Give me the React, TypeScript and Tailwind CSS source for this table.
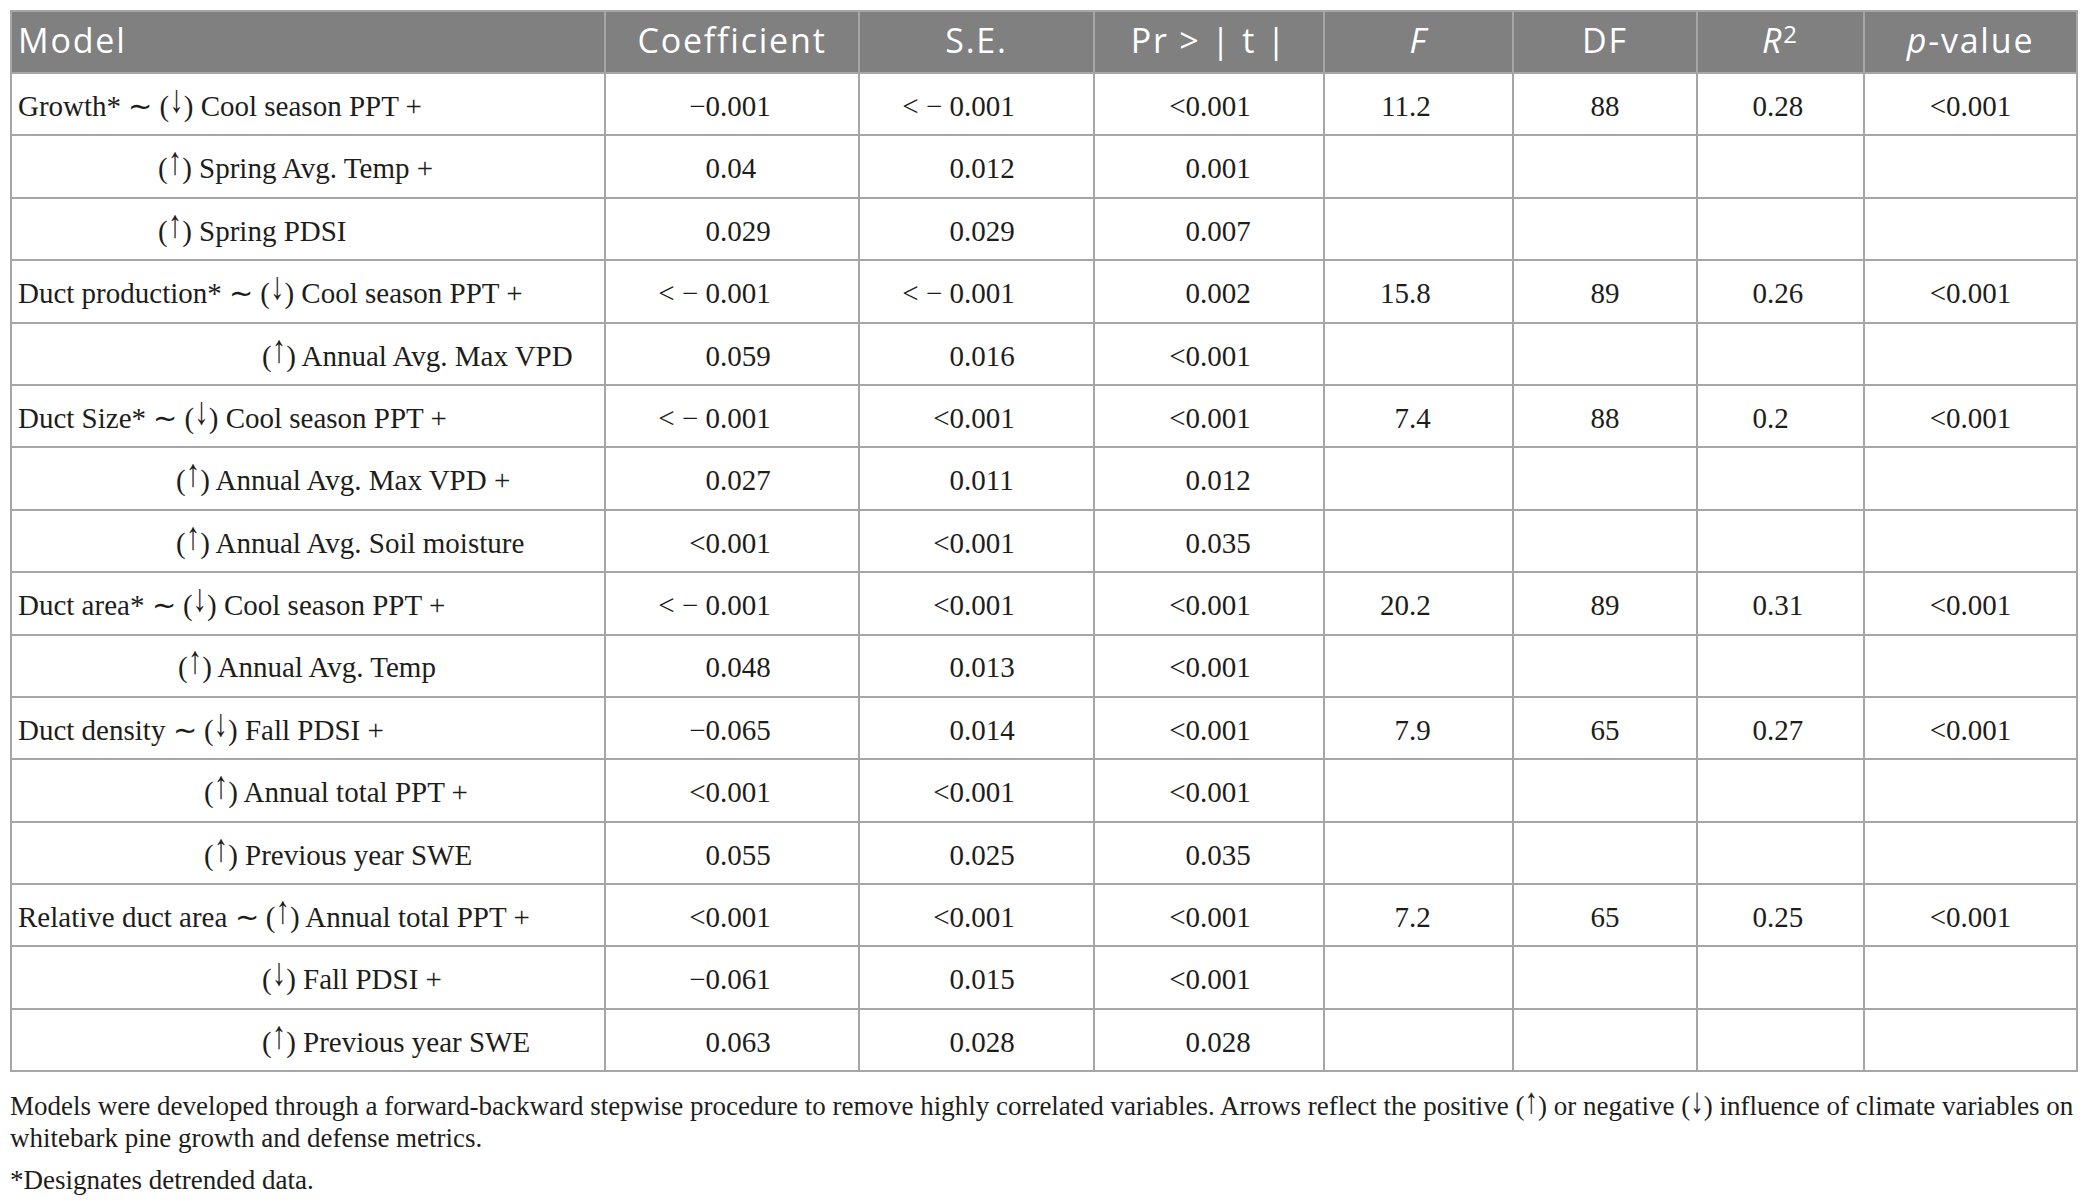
import React from 'react';

type Row = {
  label: string;
  indent?: string;
  coef: string;
  se: string;
  pr: string;
  f?: string;
  df?: string;
  r2?: string;
  p?: string;
};

const rows: Row[] = [
  { label: 'Growth* ∼ (↓) Cool season PPT +', coef: '−0.001', se: '< − 0.001', pr: '<0.001', f: '11.2', df: '88', r2: '0.28', p: '<0.001' },
  { label: '(↑) Spring Avg. Temp +', indent: 'pl-[146px]', coef: '0.04', se: '0.012', pr: '0.001' },
  { label: '(↑) Spring PDSI', indent: 'pl-[146px]', coef: '0.029', se: '0.029', pr: '0.007' },
  { label: 'Duct production* ∼ (↓) Cool season PPT +', coef: '< − 0.001', se: '< − 0.001', pr: '0.002', f: '15.8', df: '89', r2: '0.26', p: '<0.001' },
  { label: '(↑) Annual Avg. Max VPD', indent: 'pl-[250px]', coef: '0.059', se: '0.016', pr: '<0.001' },
  { label: 'Duct Size* ∼ (↓) Cool season PPT +', coef: '< − 0.001', se: '<0.001', pr: '<0.001', f: '7.4', df: '88', r2: '0.2', p: '<0.001' },
  { label: '(↑) Annual Avg. Max VPD +', indent: 'pl-[164px]', coef: '0.027', se: '0.011', pr: '0.012' },
  { label: '(↑) Annual Avg. Soil moisture', indent: 'pl-[164px]', coef: '<0.001', se: '<0.001', pr: '0.035' },
  { label: 'Duct area* ∼ (↓) Cool season PPT +', coef: '< − 0.001', se: '<0.001', pr: '<0.001', f: '20.2', df: '89', r2: '0.31', p: '<0.001' },
  { label: '(↑) Annual Avg. Temp', indent: 'pl-[166px]', coef: '0.048', se: '0.013', pr: '<0.001' },
  { label: 'Duct density ∼ (↓) Fall PDSI +', coef: '−0.065', se: '0.014', pr: '<0.001', f: '7.9', df: '65', r2: '0.27', p: '<0.001' },
  { label: '(↑) Annual total PPT +', indent: 'pl-[192px]', coef: '<0.001', se: '<0.001', pr: '<0.001' },
  { label: '(↑) Previous year SWE', indent: 'pl-[192px]', coef: '0.055', se: '0.025', pr: '0.035' },
  { label: 'Relative duct area ∼ (↑) Annual total PPT +', coef: '<0.001', se: '<0.001', pr: '<0.001', f: '7.2', df: '65', r2: '0.25', p: '<0.001' },
  { label: '(↓) Fall PDSI +', indent: 'pl-[250px]', coef: '−0.061', se: '0.015', pr: '<0.001' },
  { label: '(↑) Previous year SWE', indent: 'pl-[250px]', coef: '0.063', se: '0.028', pr: '0.028' },
];

// Liberation's arrows sit short; stretch them up to cap height without changing width
const withArrows = (s: string) =>
  s.split(/([↑↓])/).map((part, i) =>
    part === '↑' || part === '↓' ? (
      <span key={i} className="inline-block scale-y-[1.35] origin-bottom">{part}</span>
    ) : (
      part
    )
  );

// numbers line up on the decimal point; intW is where the point sits in the cell
const Num: React.FC<{ v?: string; intW: string }> = ({ v, intW }) => {
  if (!v) return null;
  const i = v.lastIndexOf('.');
  return (
    <div className="flex whitespace-pre">
      <span className={`${intW} text-right`}>{v.slice(0, i)}</span>
      <span>{v.slice(i)}</span>
    </div>
  );
};

const th = 'border-2 border-[#a6a6a6] font-normal text-white text-center pb-[4px]';
const td = 'border-2 border-[#a6a6a6] p-0 pt-[5px]';

export default function App() {
  return (
    <div className="bg-white min-h-screen pl-[10px] pt-[10px] text-[#1d1d1b]">
      <table className="table-fixed border-collapse w-[2066px]">
        <colgroup>
          <col className="w-[594px]" />
          <col className="w-[254px]" />
          <col className="w-[235px]" />
          <col className="w-[230px]" />
          <col className="w-[189px]" />
          <col className="w-[184px]" />
          <col className="w-[167px]" />
          <col className="w-[213px]" />
        </colgroup>
        <thead>
          <tr className="h-[62px] bg-[#808080] text-[34px] tracking-[1.8px] font-['Open_Sans',sans-serif]">
            <th className={`${th} !text-left pl-[6px]`}>Model</th>
            <th className={th}>Coefficient</th>
            <th className={th}>S.E.</th>
            <th className={th}>Pr &gt; | t |</th>
            <th className={th}><i>F</i></th>
            <th className={th}>DF</th>
            <th className={th}>
              <i>R</i>
              <sup className="text-[24px] relative -top-[10px]">2</sup>
            </th>
            <th className={th}><i>p</i>-value</th>
          </tr>
        </thead>
        <tbody className="font-['Liberation_Serif',serif] text-[29px]">
          {rows.map((r, idx) => (
            <tr key={idx} className="h-[62.4px]">
              <td className={`${td} whitespace-pre ${r.indent ?? 'pl-[6px]'}`}>{withArrows(r.label)}</td>
              <td className={td}><Num v={r.coef} intW="w-[114px]" /></td>
              <td className={td}><Num v={r.se} intW="w-[104px]" /></td>
              <td className={td}><Num v={r.pr} intW="w-[105px]" /></td>
              <td className={td}><Num v={r.f} intW="w-[84px]" /></td>
              <td className={`${td} text-center`}>{r.df}</td>
              <td className={td}><Num v={r.r2} intW="w-[69px]" /></td>
              <td className={`${td} text-center`}>{r.p}</td>
            </tr>
          ))}
        </tbody>
      </table>
      <div className="font-['Liberation_Serif',serif] text-[27px] leading-[32px] mt-[18px]">
        <p>
          <span className="whitespace-nowrap">
            Models were developed through a forward-backward stepwise procedure to remove highly correlated variables. Arrows reflect the positive {withArrows('(↑)')} or negative {withArrows('(↓)')} influence of climate variables on
          </span>
          <br />
          whitebark pine growth and defense metrics.
        </p>
        <p className="mt-[10px]">*Designates detrended data.</p>
      </div>
    </div>
  );
}
